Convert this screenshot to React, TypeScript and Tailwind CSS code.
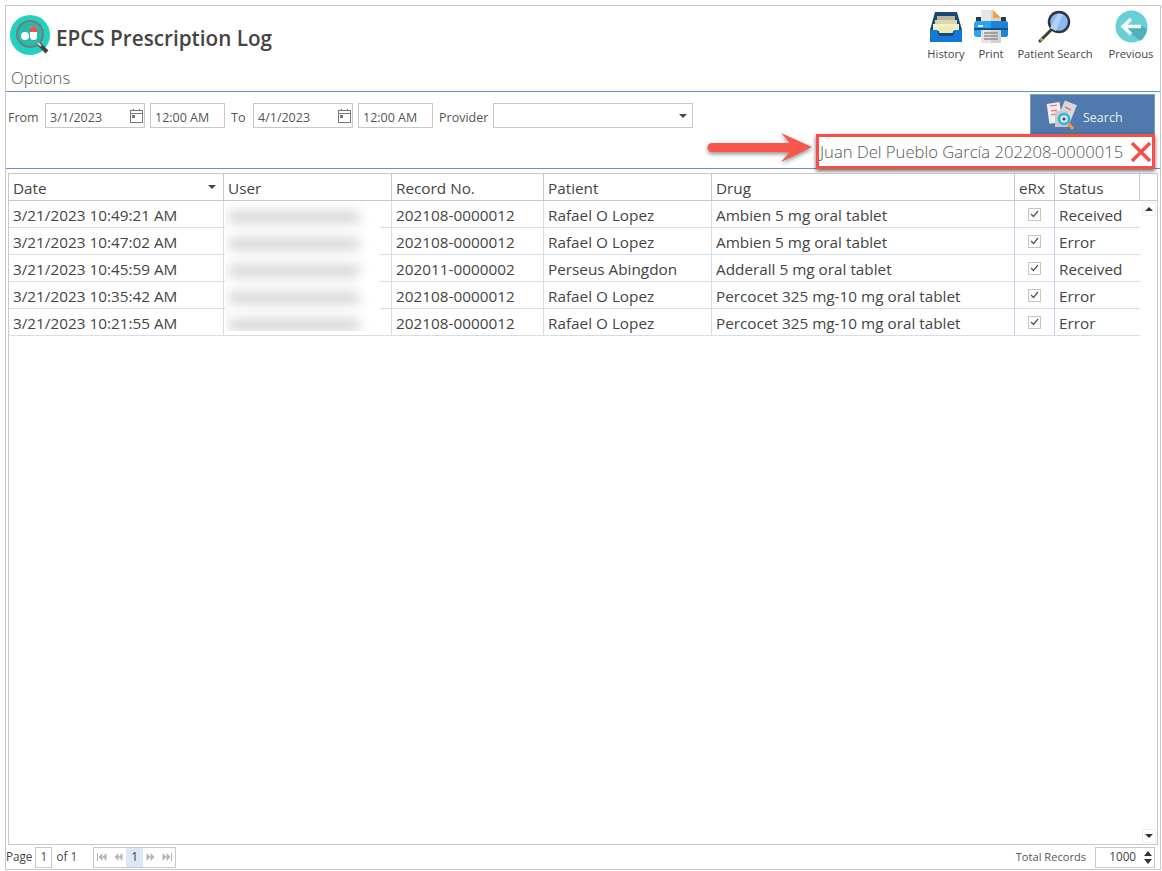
const font = "font-['Open_Sans','Noto_Sans',sans-serif]";

const rows = [
  ["3/21/2023 10:49:21 AM", "202108-0000012", "Rafael O Lopez", "Ambien 5 mg oral tablet", "Received"],
  ["3/21/2023 10:47:02 AM", "202108-0000012", "Rafael O Lopez", "Ambien 5 mg oral tablet", "Error"],
  ["3/21/2023 10:45:59 AM", "202011-0000002", "Perseus Abingdon", "Adderall 5 mg oral tablet", "Received"],
  ["3/21/2023 10:35:42 AM", "202108-0000012", "Rafael O Lopez", "Percocet 325 mg-10 mg oral tablet", "Error"],
  ["3/21/2023 10:21:55 AM", "202108-0000012", "Rafael O Lopez", "Percocet 325 mg-10 mg oral tablet", "Error"],
];

const gridCols = "grid grid-cols-[214px_168px_152px_168px_303px_40px_86px]";

function Logo() {
  return (
    <svg width="42" height="42" viewBox="0 0 42 42">
      <circle cx="20" cy="20" r="20" fill="#22d1c0" />
      <circle cx="20" cy="19" r="13" fill="#2bb8ac" stroke="#6f7f80" strokeWidth="2" />
      <circle cx="15" cy="21" r="4" fill="#fff" />
      <rect x="20" y="11" width="7" height="14" rx="3.5" fill="#fff" />
      <path d="M20 17v-2.500a3.500 3.500 0 0 1 7 0V17z" fill="#f0504f" />
      <path d="M29 29l8 8" stroke="#444" strokeWidth="4" />
      <path d="M28 28l3 3" stroke="#ddd" strokeWidth="2" />
    </svg>
  );
}

function HistoryIcon() {
  return (
    <svg width="34" height="32" viewBox="0 0 34 32">
      <path d="M6 1h22l5 18v11a1 1 0 0 1-1 1H2a1 1 0 0 1-1-1V19z" fill="#16487a" />
      <rect x="8" y="5" width="18" height="6" fill="#bfb79a" />
      <rect x="6" y="9" width="22" height="6" fill="#dcd6b4" />
      <rect x="4" y="13" width="26" height="7" fill="#f5efc8" />
      <path d="M1 19h8v3a3 3 0 0 0 3 3h10a3 3 0 0 0 3-3v-3h8v12H1z" fill="#1479d4" />
      <path d="M10 16h14v5a1 1 0 0 1-1 1H11a1 1 0 0 1-1-1z" fill="#efe8bd" />
    </svg>
  );
}

function PrintIcon() {
  return (
    <svg width="34" height="33" viewBox="0 0 34 33">
      <path d="M7 0h12v12H7z" fill="#e6e6e6" />
      <path d="M17 0h2l8 8v6H17z" fill="#d4d4d4" />
      <path d="M19 0l8 8h-8z" fill="#f5a13c" />
      <path d="M2 7h5v6H2zM27 7h5v6h-5z" fill="#2f3a46" />
      <rect x="0" y="11" width="34" height="16" rx="3" fill="#2aa3f2" />
      <path d="M17 11h14a3 3 0 0 1 3 3v10a3 3 0 0 1-3 3H17z" fill="#1c84d8" />
      <rect x="4" y="15" width="5" height="2" fill="#e8f4ff" />
      <rect x="0" y="18" width="34" height="2" fill="#1a4f80" />
      <rect x="7" y="20" width="20" height="13" fill="#e4e4e4" />
      <rect x="17" y="20" width="10" height="13" fill="#d2d2d2" />
      <path d="M10 23h14M10 26h14M10 29h14" stroke="#8f8f8f" strokeWidth="1.500" />
    </svg>
  );
}

function MagnifierIcon() {
  return (
    <svg width="34" height="33" viewBox="0 0 34 33">
      <path d="M13 20L2 31" stroke="#3a3f2a" strokeWidth="3" strokeLinecap="round" />
      <path d="M2.500 30.500l2-2" stroke="#a8c84a" strokeWidth="2" />
      <circle cx="21" cy="12" r="10" fill="#8ab8f2" stroke="#2f3640" strokeWidth="2.500" />
      <path d="M18 21l7-17h-5l-8 14z" fill="#b4d2f8" />
    </svg>
  );
}

function PreviousIcon() {
  return (
    <svg width="33" height="33" viewBox="0 0 33 33">
      <circle cx="16.500" cy="16.500" r="16" fill="#68cfd6" />
      <path d="M9 17l16 14a16 16 0 0 0 7-12l-5-3z" fill="#4fb0ba" />
      <path d="M16 9l-8 7.500 8 7.500M8.500 16.500H26" fill="none" stroke="#f2fbfb" strokeWidth="3.500" />
    </svg>
  );
}

function SearchDocsIcon() {
  return (
    <svg width="32" height="32" viewBox="0 0 32 32">
      <rect x="2" y="3" width="13" height="20" fill="#f1eeee" transform="rotate(-8 8 13)" />
      <rect x="15" y="2" width="13" height="18" fill="#d8d8d8" transform="rotate(22 21 11)" />
      <path d="M4 6l7-1M5 11l6-1M5 15l5-1M19 7l6 3" stroke="#ef5a5a" strokeWidth="1.200" />
      <rect x="9" y="11" width="13" height="16" fill="#c9c9c9" />
      <circle cx="18" cy="19" r="5" fill="#ddf" stroke="#26bcd0" strokeWidth="2.500" />
      <circle cx="18" cy="19" r="1.500" fill="#444" />
      <path d="M22 23l5 6" stroke="#f29a3c" strokeWidth="3" />
    </svg>
  );
}

function CalendarIcon() {
  return (
    <svg width="13" height="14" viewBox="0 0 13 14" fill="none" stroke="#777">
      <rect x="0.500" y="1.500" width="12" height="12" />
      <path d="M0.500 4.500h12M3.500 0v2M9.500 0v2" />
      <rect x="2.500" y="6.500" width="2" height="2" fill="#777" />
    </svg>
  );
}

function CheckBox() {
  return (
    <div className="w-[13px] h-[13px] border border-[#c4c4c4] bg-white flex items-center justify-center">
      <svg width="9" height="8" viewBox="0 0 9 8" fill="none" stroke="#555" strokeWidth="1.200">
        <path d="M1 4l2.500 2.500L8 1" />
      </svg>
    </div>
  );
}

function PagerArrow({ flip, bar }: { flip?: boolean; bar?: boolean }) {
  return (
    <svg width="10" height="8" viewBox="0 0 10 8" fill="#b4b4b4" className={flip ? "-scale-x-100" : ""}>
      {bar && <rect x="0" y="0" width="1" height="8" />}
      <path d="M5.500 0v8L1.500 4zM9.500 0v8L5.500 4z" />
    </svg>
  );
}

function ToolButton({ label, width, icon }: { label: string; width: string; icon: React.ReactNode }) {
  return (
    <div className={`flex flex-col items-center ${width}`}>
      <div className="h-[33px] flex items-center justify-center">{icon}</div>
      <span className="mt-[3px] text-[11.200px] leading-[16px] text-[#444] whitespace-nowrap">{label}</span>
    </div>
  );
}

function DateField({ value, width }: { value: string; width: string }) {
  return (
    <div className={`h-[25px] ${width} border border-[#c8c8c8] flex items-center justify-between pl-[4px] pr-[1px] text-[12.500px] text-[#555]`}>
      <span className="pt-[5px]">{value}</span>
      <CalendarIcon />
    </div>
  );
}

function TimeField({ value }: { value: string }) {
  return (
    <div className="h-[25px] w-[75px] border border-[#c8c8c8] flex items-center pl-[4px] text-[12.500px] text-[#555]">
      <span className="pt-[5px]">{value}</span>
    </div>
  );
}

export default function App() {
  return (
    <div className={`w-[1162px] h-[871px] bg-white pl-[5px] pt-[5px] overflow-hidden ${font}`}>
      <div className="relative w-[1156px] h-[865px] border border-[#c8c8c8] flex flex-col">
        {/* header */}
        <div className="h-[85px] shrink-0 flex justify-between">
          <div className="pl-[4px] pt-[9px]">
            <div className="flex items-center gap-[4px] h-[42px]">
              <Logo />
              <h1 className="pt-[4px] text-[20.700px] font-semibold text-[#444] leading-none whitespace-nowrap">EPCS Prescription Log</h1>
            </div>
            <div className="pl-[1px] mt-[11px] text-[16.600px] font-light leading-[20px] text-[#555]">Options</div>
          </div>
          <div className="flex pt-[4px]">
            <ToolButton label="History" width="w-[56px]" icon={<HistoryIcon />} />
            <ToolButton label="Print" width="w-[34px]" icon={<PrintIcon />} />
            <ToolButton label="Patient Search" width="w-[94px]" icon={<MagnifierIcon />} />
            <ToolButton label="Previous" width="w-[58px]" icon={<PreviousIcon />} />
          </div>
        </div>

        {/* filters */}
        <div className="relative h-[78px] shrink-0 border-y border-[#6f8fc0] flex justify-between pr-[5px]">
          <div className="flex items-center h-[25px] mt-[11px] pl-[2px] text-[12.500px] text-[#555]">
            <span className="w-[37px] pt-[5px]">From</span>
            <DateField value="3/1/2023" width="w-[100px]" />
            <div className="w-[5px]" />
            <TimeField value="12:00 AM" />
            <span className="w-[28px] pl-[6px] pt-[5px]">To</span>
            <DateField value="4/1/2023" width="w-[100px]" />
            <div className="w-[5px]" />
            <TimeField value="12:00 AM" />
            <span className="w-[60px] pl-[6px] pt-[5px]">Provider</span>
            <div className="h-[25px] w-[200px] border border-[#c8c8c8] flex items-center justify-end pr-[5px]">
              <div className="w-0 h-0 border-x-[4px] border-x-transparent border-t-[4px] border-t-[#444]" />
            </div>
          </div>
          <div className="w-[125px] h-[44px] mt-[2px] bg-[#5079ae] border border-[#7c9cc6] flex items-center pl-[15px] gap-[5px] text-white text-[12.500px]">
            <SearchDocsIcon />
            <span className="pt-[4px] text-[#e8eef6]">Search</span>
          </div>

          {/* red callout drawn over the screenshot */}
          <div className="absolute left-[810px] top-[42px] w-[339px] h-[35px] border-[3px] border-[#f2504b] bg-white shadow-[0_2px_4px_rgba(0,0,0,0.6)] flex items-center justify-between pl-[1px]">
            <span className="pt-[2px] text-[16.650px] font-light text-[#555] whitespace-nowrap">Juan Del Pueblo García 202208-0000015</span>
            <svg width="22" height="22" viewBox="0 0 22 22" stroke="#f2504b" strokeWidth="3.500">
              <path d="M2 2l18 18M20 2L2 20" />
            </svg>
          </div>
          <svg className="absolute left-[701px] top-[40px] drop-shadow-[0_2px_2px_rgba(0,0,0,0.45)]" width="108" height="32" viewBox="0 0 108 32">
            <path d="M5 11h78L74 1l31 14-31 15 9-10H5a4.500 4.500 0 0 1 0-9z" fill="#f8574c" />
          </svg>
        </div>

        {/* table */}
        <div className="relative mt-[4px] ml-[2px] w-[1150px] h-[672px] shrink-0 border border-[#c8c8c8] flex flex-col text-[15.300px] text-[#444]">
          <div className={`${gridCols} h-[27px] shrink-0 border-b border-[#c8c8c8]`}>
            <div className="flex items-center justify-between pl-[4px] pr-[7px]">
              <span className="pt-[2px]">Date</span>
              <div className="w-0 h-0 border-x-[4px] border-x-transparent border-t-[4px] border-t-[#444]" />
            </div>
            <div className="flex items-center pl-[4px] pt-[2px] border-l border-[#c8c8c8]">User</div>
            <div className="flex items-center pl-[4px] pt-[2px] border-l border-[#c8c8c8]">Record No.</div>
            <div className="flex items-center pl-[4px] pt-[2px] border-l border-[#c8c8c8]">Patient</div>
            <div className="flex items-center pl-[4px] pt-[2px] border-l border-[#c8c8c8]">Drug</div>
            <div className="flex items-center pl-[4px] pt-[2px] border-l border-[#c8c8c8]">eRx</div>
            <div className="flex items-center pl-[4px] pt-[2px] border-x border-[#c8c8c8]">Status</div>
          </div>
          <div className="flex flex-1 min-h-0">
            <div className="w-[1131px]">
              {rows.map((row, i) => (
                <div key={i} className={`${gridCols} h-[27px] border-b border-[#d5dde6]`}>
                  <div className="flex items-center pl-[4px] pt-[2px] whitespace-nowrap">{row[0]}</div>
                  <div className="border-l border-[#d5dde6]" />
                  <div className="flex items-center pl-[4px] pt-[2px] border-l border-[#d5dde6]">{row[1]}</div>
                  <div className="flex items-center pl-[4px] pt-[2px] border-l border-[#d5dde6]">{row[2]}</div>
                  <div className="flex items-center pl-[4px] pt-[2px] border-l border-[#d5dde6] whitespace-nowrap">{row[3]}</div>
                  <div className="flex items-center justify-center border-l border-[#c3d2e6]"><CheckBox /></div>
                  <div className="flex items-center pl-[4px] pt-[2px] border-l border-[#c3d2e6]">{row[4]}</div>
                </div>
              ))}
            </div>
            <div className="flex-1 flex flex-col justify-between items-center py-[1px]">
              <div className="w-[14px] h-[14px] border border-[#eee] flex items-center justify-center">
                <div className="w-0 h-0 border-x-[4px] border-x-transparent border-b-[4px] border-b-[#333]" />
              </div>
              <div className="w-[14px] h-[14px] border border-[#eee] flex items-center justify-center">
                <div className="w-0 h-0 border-x-[4px] border-x-transparent border-t-[4px] border-t-[#333]" />
              </div>
            </div>
          </div>

          {/* blurred user names */}
          <div className="absolute left-[216px] top-[29px] w-[155px] h-[128px] bg-white overflow-hidden">
            {[0, 1, 2, 3, 4].map((i) => (
              <div key={i} className="h-[27px] flex items-center px-[4px]">
                <div className="w-[130px] h-[12px] bg-[#d4d4d4] blur-[6px]" />
              </div>
            ))}
          </div>
        </div>

        {/* pager */}
        <div className="flex-1 flex items-center justify-between pr-[5px] text-[11.700px] text-[#444]">
          <div className="flex items-center">
            <span>Page</span>
            <div className="ml-[3px] w-[17px] h-[21px] border border-[#c8c8c8] flex items-center justify-center">1</div>
            <span className="ml-[4px]">of 1</span>
            <div className="ml-[16px] h-[21px] w-[83px] border border-[#c8c8c8] flex items-center">
              <span className="w-[16px] flex justify-center"><PagerArrow bar /></span>
              <span className="w-[16px] flex justify-center"><PagerArrow /></span>
              <span className="w-[17px] h-full bg-[#dce8f5] flex items-center justify-center text-[12px] text-[#444]">1</span>
              <span className="w-[16px] flex justify-center"><PagerArrow flip /></span>
              <span className="w-[16px] flex justify-center"><PagerArrow flip bar /></span>
            </div>
          </div>
          <div className="flex items-center">
            <span className="text-[11.100px] text-[#555]">Total Records</span>
            <div className="ml-[9px] w-[60px] h-[21px] border border-[#c8c8c8] flex items-center justify-end pr-[2px] gap-[8px]">
              <span>1000</span>
              <div className="flex flex-col gap-[3px]">
                <div className="w-0 h-0 border-x-[4px] border-x-transparent border-b-[5px] border-b-[#333]" />
                <div className="w-0 h-0 border-x-[4px] border-x-transparent border-t-[5px] border-t-[#333]" />
              </div>
            </div>
          </div>
        </div>
      </div>
    </div>
  );
}
